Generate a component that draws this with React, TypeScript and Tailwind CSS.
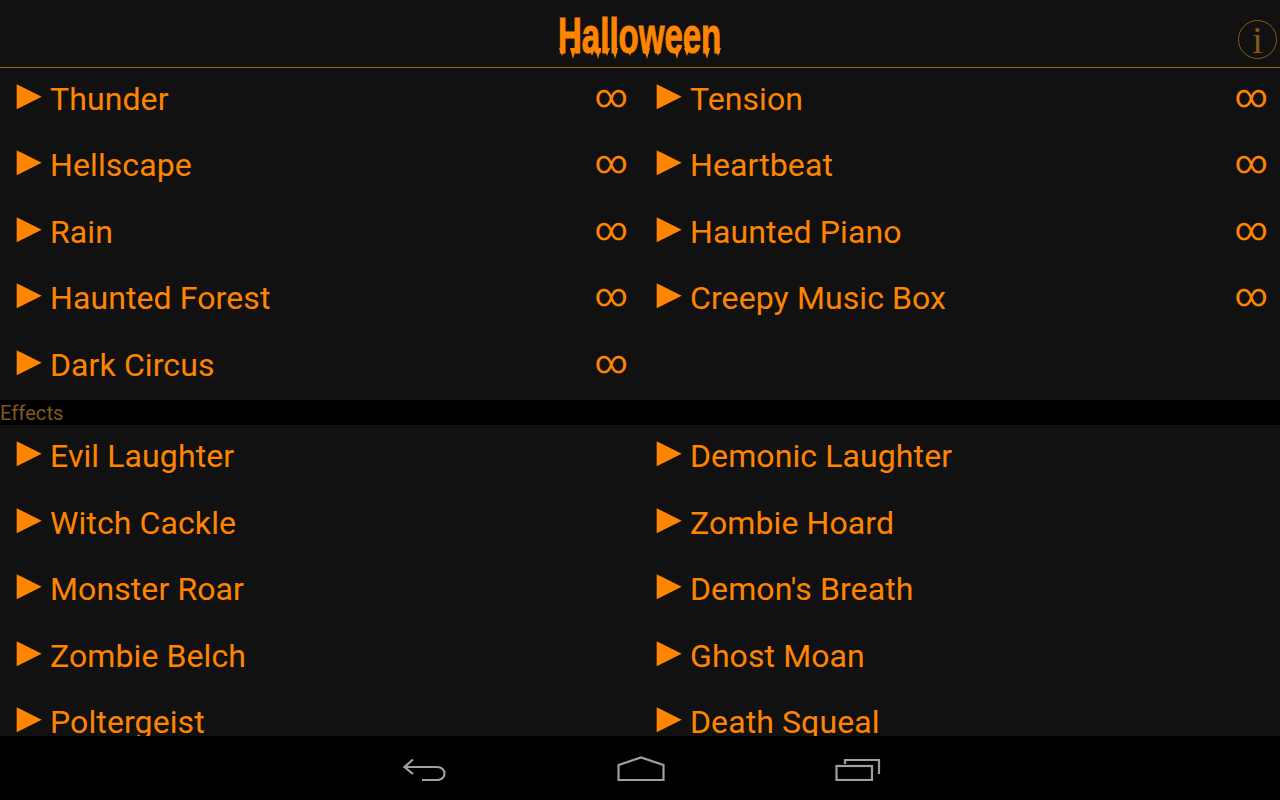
const ambience: (string | null)[][] = [
  ["Thunder", "Tension"],
  ["Hellscape", "Heartbeat"],
  ["Rain", "Haunted Piano"],
  ["Haunted Forest", "Creepy Music Box"],
  ["Dark Circus", null],
];

const effects: string[][] = [
  ["Evil Laughter", "Demonic Laughter"],
  ["Witch Cackle", "Zombie Hoard"],
  ["Monster Roar", "Demon's Breath"],
  ["Zombie Belch", "Ghost Moan"],
  ["Poltergeist", "Death Squeal"],
];

function PlayIcon() {
  return (
    <svg width="26" height="26" viewBox="0 0 26 26" className="shrink-0">
      <polygon points="0.7,0.3 25.7,12.8 0.7,25.3" fill="#ff8500" />
    </svg>
  );
}

function Sound({ name, loop }: { name: string; loop?: boolean }) {
  return (
    <div className="flex h-[66.5px] pl-4 pr-3 min-w-0">
      <div className="mt-[16px]">
        <PlayIcon />
      </div>
      <span className="ml-2 mt-[11px] h-[40px] leading-[40px] text-[32px] tracking-[0.1px] text-[#ff8500] flex-1">{name}</span>
      {loop && <span className="mt-[8px] h-[40px] leading-[40px] text-[32px] text-[#ff8500]">∞</span>}
    </div>
  );
}

const drips = [5, 16, 35, 41, 50, 58, 73, 90, 101, 120, 130, 150, 161];

function Logo() {
  return (
    <div className="relative h-[44px] w-[166px] mt-[6px] flex items-center justify-center">
      <span className="text-[50px] font-bold text-[#ff8500] leading-none scale-x-[0.66] [font-family:'Liberation_Sans',sans-serif] [-webkit-text-stroke:1px_#ff8500]">
        Halloween
      </span>
      {/* drips under the letters */}
      <svg width="166" height="12" viewBox="0 0 166 12" className="absolute left-0 bottom-[-2px]" fill="#ff8500">
        {drips.map((x, i) => (
          <polygon key={x} points={`${x - 3},0 ${x + 3},0 ${x},${i % 2 ? 11 : 8}`} />
        ))}
      </svg>
    </div>
  );
}

function InfoIcon() {
  return (
    <div className="h-[39px] w-[39px] rounded-full border-[1.5px] border-[#8a5a10] flex items-center justify-center">
      <span className="text-[38px] leading-none text-[#8a5a10] [font-family:'Liberation_Serif',serif]">i</span>
    </div>
  );
}

export default function App() {
  return (
    <div className="w-[1280px] h-[800px] flex flex-col overflow-hidden bg-[#111111] [font-family:Roboto,sans-serif]">
      {/* Header */}
      <div className="relative h-[67.6px] shrink-0 border-b border-[#9a6410] flex items-center justify-center">
        <Logo />
        <div className="absolute right-[3px] top-[20px]">
          <InfoIcon />
        </div>
      </div>

      {/* Lista */}
      <div className="flex-1 min-h-0 overflow-hidden">
        {ambience.map((row) => (
          <div key={row[0]} className="grid grid-cols-2">
            <Sound name={row[0] as string} loop />
            {row[1] && <Sound name={row[1]} loop />}
          </div>
        ))}
        <div className="h-[25px] bg-black text-[20px] leading-[26px] tracking-[0.1px] text-[#7f5a1c]">Effects</div>
        {effects.map((row) => (
          <div key={row[0]} className="grid grid-cols-2">
            <Sound name={row[0]} />
            <Sound name={row[1]} />
          </div>
        ))}
      </div>

      {/* Nav bar */}
      <div className="h-[64px] shrink-0 bg-black flex items-center justify-center gap-[170px] pt-[2px] pl-[3px]">
        <svg width="44" height="24" viewBox="0 0 44 24" fill="none" stroke="#a0a0a0" strokeWidth="2.2">
          <path d="M10 2.5 L1.5 10 L10 17" />
          <path d="M2 10 H34 C44 10 44 23 34 23 H19" />
        </svg>
        <svg width="48" height="26" viewBox="0 0 48 26" fill="none" stroke="#a0a0a0" strokeWidth="2.2">
          <path d="M1.5 9 L24 1.5 L46.5 9 V24 H1.5 Z" />
        </svg>
        <svg width="46" height="24" viewBox="0 0 46 24" fill="none" stroke="#a0a0a0" strokeWidth="2.2">
          <rect x="1.5" y="9" width="35.5" height="14" />
          <path d="M10 7 V3 H44 V17" />
        </svg>
      </div>
    </div>
  );
}
